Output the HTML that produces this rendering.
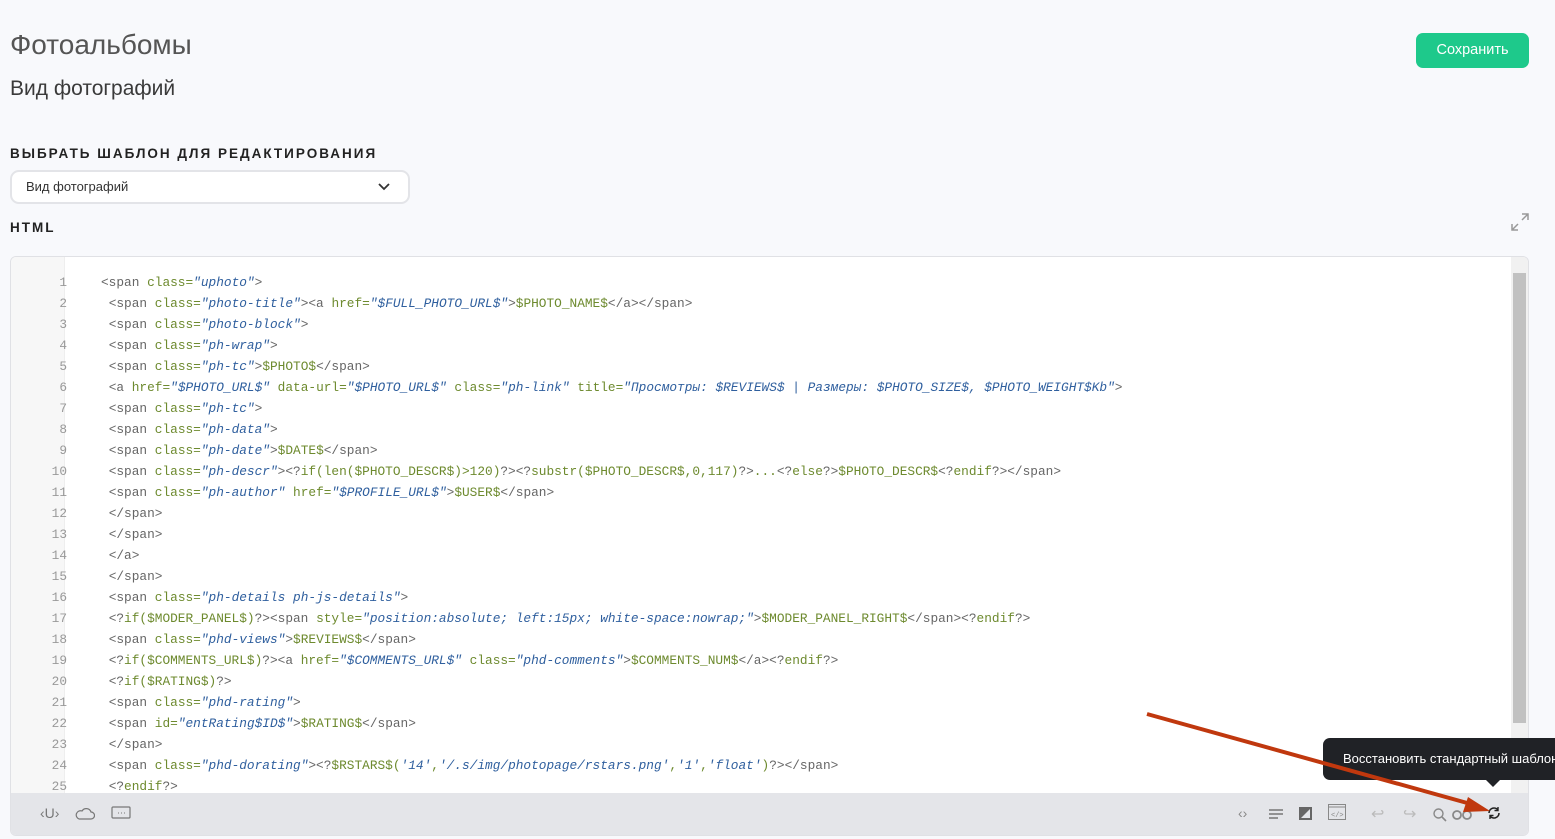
<!DOCTYPE html>
<html><head><meta charset="utf-8"><style>
body{margin:0;width:1555px;height:839px;background:#f8f9fc;font-family:"Liberation Sans",sans-serif;position:relative;overflow:hidden}
.a{position:absolute}
h1{position:absolute;left:10px;top:29px;margin:0;font-weight:400;font-size:28px;color:#555}
h2{position:absolute;left:10px;top:77px;margin:0;font-weight:400;font-size:21px;color:#3a3a3a}
.lbl{position:absolute;left:10px;font-weight:700;font-size:13.5px;letter-spacing:2px;color:#222}
.btn{left:1416px;top:33px;width:113px;height:35px;background:#1ec98b;border-radius:7px;color:#fff;font-size:14.5px;text-align:center;line-height:35px}
.sel{left:10px;top:170px;width:382px;height:30px;border:2px solid #e3e4e8;border-radius:9px;background:#fff;font-size:13px;color:#333;line-height:30px;padding-left:14px;box-sizing:content-box}
.ed{left:10px;top:256px;width:1517px;height:578px;border:1px solid #e0e1e5;border-radius:6px;background:#fff;overflow:hidden}
.gut{left:0;top:0;width:53px;height:536px;background:#f7f7f7;border-right:1px solid #eee}
.code{left:0;top:15px;font-family:"Liberation Mono",monospace;font-size:12.8px;line-height:21px;color:#555}
.code div{height:21px;white-space:pre}
.n{display:inline-block;width:56px;text-align:right;color:#999;margin-right:34px}
.t{color:#666}.k{color:#6d8a2e}.s{color:#2f5f9e;font-style:italic}
.tb{left:0;top:536px;width:1517px;height:42px;background:#e4e5e9}
.sb{left:1500px;top:0;width:17px;height:536px;background:#f1f1f1}
.th{left:1502px;top:16px;width:13px;height:450px;background:#c1c1c1}
.tip{left:1323px;top:738px;width:240px;height:42px;background:#202226;border-radius:7px;color:#fff;font-size:13px;line-height:42px;padding-left:20px}
.ic{color:#777;font-size:14px}
</style></head><body>
<h1>Фотоальбомы</h1>
<h2>Вид фотографий</h2>
<div class="a btn">Сохранить</div>
<div class="lbl" style="top:146px">ВЫБРАТЬ ШАБЛОН ДЛЯ РЕДАКТИРОВАНИЯ</div>
<div class="a sel">Вид фотографий<svg class="a" style="left:366px;top:11px" width="12" height="8"><path d="M1 1l5 5 5-5" stroke="#333" stroke-width="1.8" fill="none"/></svg></div>
<div class="lbl" style="top:220px">HTML</div>
<svg class="a" style="left:1510px;top:212px" width="20" height="20"><path d="M12 2h6v6M18 2l-6 6M8 18H2v-6M2 18l6-6" stroke="#999" stroke-width="1.5" fill="none"/></svg>
<div class="a ed">
<div class="a gut"></div>
<div class="a code"><div><span class="n">1</span><span class="t">&lt;span</span> <span class="k">class=</span><span class="s">"uphoto"</span><span class="t">&gt;</span></div><div><span class="n">2</span> <span class="t">&lt;span</span> <span class="k">class=</span><span class="s">"photo-title"</span><span class="t">&gt;&lt;a</span> <span class="k">href=</span><span class="s">"$FULL_PHOTO_URL$"</span><span class="t">&gt;</span><span class="k">$PHOTO_NAME$</span><span class="t">&lt;/a&gt;&lt;/span&gt;</span></div><div><span class="n">3</span> <span class="t">&lt;span</span> <span class="k">class=</span><span class="s">"photo-block"</span><span class="t">&gt;</span></div><div><span class="n">4</span> <span class="t">&lt;span</span> <span class="k">class=</span><span class="s">"ph-wrap"</span><span class="t">&gt;</span></div><div><span class="n">5</span> <span class="t">&lt;span</span> <span class="k">class=</span><span class="s">"ph-tc"</span><span class="t">&gt;</span><span class="k">$PHOTO$</span><span class="t">&lt;/span&gt;</span></div><div><span class="n">6</span> <span class="t">&lt;a</span> <span class="k">href=</span><span class="s">"$PHOTO_URL$"</span> <span class="k">data-url=</span><span class="s">"$PHOTO_URL$"</span> <span class="k">class=</span><span class="s">"ph-link"</span> <span class="k">title=</span><span class="s">"Просмотры: $REVIEWS$ | Размеры: $PHOTO_SIZE$, $PHOTO_WEIGHT$Kb"</span><span class="t">&gt;</span></div><div><span class="n">7</span> <span class="t">&lt;span</span> <span class="k">class=</span><span class="s">"ph-tc"</span><span class="t">&gt;</span></div><div><span class="n">8</span> <span class="t">&lt;span</span> <span class="k">class=</span><span class="s">"ph-data"</span><span class="t">&gt;</span></div><div><span class="n">9</span> <span class="t">&lt;span</span> <span class="k">class=</span><span class="s">"ph-date"</span><span class="t">&gt;</span><span class="k">$DATE$</span><span class="t">&lt;/span&gt;</span></div><div><span class="n">10</span> <span class="t">&lt;span</span> <span class="k">class=</span><span class="s">"ph-descr"</span><span class="t">&gt;&lt;?</span><span class="k">if(len($PHOTO_DESCR$)&gt;120)</span><span class="t">?&gt;&lt;?</span><span class="k">substr($PHOTO_DESCR$,0,117)</span><span class="t">?&gt;</span><span class="k">...</span><span class="t">&lt;?</span><span class="k">else</span><span class="t">?&gt;</span><span class="k">$PHOTO_DESCR$</span><span class="t">&lt;?</span><span class="k">endif</span><span class="t">?&gt;&lt;/span&gt;</span></div><div><span class="n">11</span> <span class="t">&lt;span</span> <span class="k">class=</span><span class="s">"ph-author"</span> <span class="k">href=</span><span class="s">"$PROFILE_URL$"</span><span class="t">&gt;</span><span class="k">$USER$</span><span class="t">&lt;/span&gt;</span></div><div><span class="n">12</span> <span class="t">&lt;/span&gt;</span></div><div><span class="n">13</span> <span class="t">&lt;/span&gt;</span></div><div><span class="n">14</span> <span class="t">&lt;/a&gt;</span></div><div><span class="n">15</span> <span class="t">&lt;/span&gt;</span></div><div><span class="n">16</span> <span class="t">&lt;span</span> <span class="k">class=</span><span class="s">"ph-details ph-js-details"</span><span class="t">&gt;</span></div><div><span class="n">17</span> <span class="t">&lt;?</span><span class="k">if($MODER_PANEL$)</span><span class="t">?&gt;&lt;span</span> <span class="k">style=</span><span class="s">"position:absolute; left:15px; white-space:nowrap;"</span><span class="t">&gt;</span><span class="k">$MODER_PANEL_RIGHT$</span><span class="t">&lt;/span&gt;&lt;?</span><span class="k">endif</span><span class="t">?&gt;</span></div><div><span class="n">18</span> <span class="t">&lt;span</span> <span class="k">class=</span><span class="s">"phd-views"</span><span class="t">&gt;</span><span class="k">$REVIEWS$</span><span class="t">&lt;/span&gt;</span></div><div><span class="n">19</span> <span class="t">&lt;?</span><span class="k">if($COMMENTS_URL$)</span><span class="t">?&gt;&lt;a</span> <span class="k">href=</span><span class="s">"$COMMENTS_URL$"</span> <span class="k">class=</span><span class="s">"phd-comments"</span><span class="t">&gt;</span><span class="k">$COMMENTS_NUM$</span><span class="t">&lt;/a&gt;&lt;?</span><span class="k">endif</span><span class="t">?&gt;</span></div><div><span class="n">20</span> <span class="t">&lt;?</span><span class="k">if($RATING$)</span><span class="t">?&gt;</span></div><div><span class="n">21</span> <span class="t">&lt;span</span> <span class="k">class=</span><span class="s">"phd-rating"</span><span class="t">&gt;</span></div><div><span class="n">22</span> <span class="t">&lt;span</span> <span class="k">id=</span><span class="s">"entRating$ID$"</span><span class="t">&gt;</span><span class="k">$RATING$</span><span class="t">&lt;/span&gt;</span></div><div><span class="n">23</span> <span class="t">&lt;/span&gt;</span></div><div><span class="n">24</span> <span class="t">&lt;span</span> <span class="k">class=</span><span class="s">"phd-dorating"</span><span class="t">&gt;&lt;?</span><span class="k">$RSTARS$(</span><span class="s">'14'</span><span class="k">,</span><span class="s">'/.s/img/photopage/rstars.png'</span><span class="k">,</span><span class="s">'1'</span><span class="k">,</span><span class="s">'float'</span><span class="k">)</span><span class="t">?&gt;&lt;/span&gt;</span></div><div><span class="n">25</span> <span class="t">&lt;?</span><span class="k">endif</span><span class="t">?&gt;</span></div></div>
<div class="a sb"></div><div class="a th"></div>
<div class="a tb">
<span class="a ic" style="left:29px;top:12px">‹U›</span>
<svg class="a" style="left:64px;top:14px" width="20" height="13"><path d="M4 12h12a3.5 3.5 0 0 0 0-7 5 5 0 0 0-9-1 4 4 0 0 0-3 8z" stroke="#777" stroke-width="1.2" fill="none"/></svg>
<svg class="a" style="left:100px;top:13px" width="20" height="14"><rect x="1" y="1" width="18" height="11" rx="1" stroke="#777" stroke-width="1.2" fill="none"/><path d="M7 7h1M10 7h1M13 7h1" stroke="#777"/></svg>
<span class="a ic" style="left:1227px;top:12px;color:#888">‹›</span>
<svg class="a" style="left:1258px;top:16px" width="14" height="11"><path d="M0 1h14M0 5h14M0 9h9" stroke="#777" stroke-width="1.6"/></svg>
<svg class="a" style="left:1288px;top:14px" width="13" height="13"><rect x="0" y="0" width="13" height="13" fill="#666"/><path d="M2 11L11 2v9z" fill="#e4e5e9"/></svg>
<svg class="a" style="left:1317px;top:11px" width="18" height="16"><rect x="0.5" y="0.5" width="17" height="15" stroke="#888" fill="none"/><path d="M1 3h16" stroke="#888"/><text x="3" y="13" font-size="7" fill="#888" font-family="Liberation Mono">&lt;/&gt;</text></svg>
<span class="a ic" style="left:1360px;top:11px;color:#bbb;font-size:16px">↩</span>
<span class="a ic" style="left:1392px;top:11px;color:#bbb;font-size:16px">↪</span>
<svg class="a" style="left:1422px;top:15px" width="14" height="14"><circle cx="5.5" cy="5.5" r="4.5" stroke="#888" stroke-width="1.4" fill="none"/><path d="M9 9l4 4" stroke="#888" stroke-width="1.6"/></svg>
<svg class="a" style="left:1441px;top:17px" width="20" height="10"><circle cx="5" cy="5" r="4" stroke="#888" stroke-width="1.8" fill="none"/><circle cx="15" cy="5" r="4" stroke="#888" stroke-width="1.8" fill="none"/></svg>
<svg class="a" style="left:1476px;top:13px" width="14" height="14"><path d="M2 7a5 5 0 0 1 9-3M12 7a5 5 0 0 1-9 3" stroke="#222" stroke-width="1.6" fill="none"/><path d="M11 1v3.5H7.5M3 13V9.5h3.5" stroke="#222" stroke-width="1.4" fill="none"/></svg>
</div>
</div>
<div class="a tip">Восстановить стандартный шаблон</div>
<svg class="a" style="left:1485px;top:779px" width="16" height="8"><path d="M0 0h16L8 8z" fill="#202226"/></svg>
<svg class="a" style="left:0;top:0" width="1555" height="839"><path d="M1147 714L1478 806" stroke="#c0380e" stroke-width="4"/><path d="M1490 811l-22-14-5 15z" fill="#c0380e"/></svg>
</body></html>
